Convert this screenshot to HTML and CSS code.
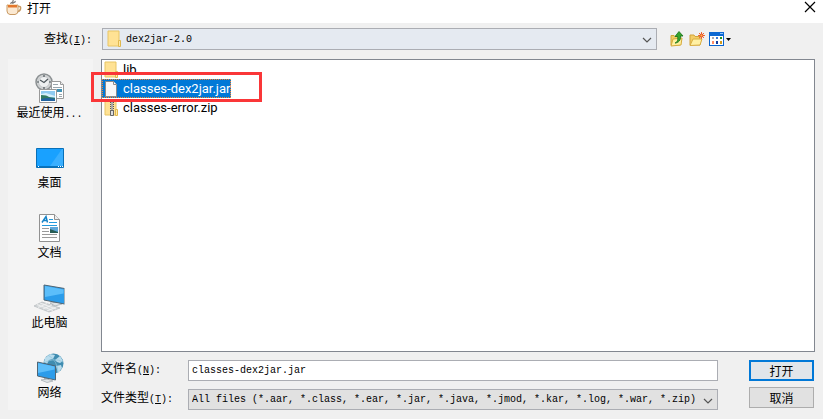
FILE: index.html
```
<!DOCTYPE html>
<html lang="zh-CN">
<head>
  <meta charset="UTF-8">
  <meta name="viewport" content="width=device-width, initial-scale=1.0">
  <title>打开</title>
  <link rel="stylesheet" href="styles.css">
</head>
<body>
  <div class="dialog">
    <header class="titlebar">
      <svg class="cup" width="16" height="16" viewBox="0 0 16 16">
        <path d="M5 4C4 2 8 3 7 0M7 4C6 2 10 3 9 1" fill="none" stroke="#777" stroke-width="1.2"/>
        <path d="M11.5 6.500h2q1.500 0 1 2.500t-3.500 2.500" fill="none" stroke="#c79a62" stroke-width="1.500"/>
        <path d="M1 5h11v6q0 3-3 3.500H4Q1 14 1 11z" fill="#fbe9d2" stroke="#c99a63"/>
        <path d="M2 5h9v2.500H2z" fill="#e3772c"/>
        <path d="M2 4.500h9" stroke="#f5dfc0"/>
      </svg>
      <span class="title">打开</span>
      <button type="button" class="close" aria-label="关闭">
        <svg width="12" height="12" viewBox="0 0 12 12"><path d="M1 1l10 10M11 1L1 11" stroke="#000" stroke-width="1.200"/></svg>
      </button>
    </header>

    <div class="lookin">
      <label class="label" for="lookin">查找<span class="mono">(<u>I</u>):</span></label>
      <div class="combo combo-folder">
        <select id="lookin" class="field"><option>dex2jar-2.0</option></select>
        <svg class="folder" width="16" height="18" viewBox="0 0 16 18">
          <path d="M1 1h11v15H1z" fill="#ffe294" stroke="#e8c564"/>
          <path d="M11.500 10.500h2v6h-2z" fill="#ffe9a8" stroke="#e0b84e"/>
        </svg>
        <svg class="arrow" width="10" height="6" viewBox="0 0 10 6"><path d="M1 1l4 4 4-4" fill="none" stroke="#555" stroke-width="1.200"/></svg>
      </div>
      <div class="tools">
        <button type="button" class="tool" aria-label="向上一级">
          <svg width="16" height="16" viewBox="0 0 16 16">
            <path d="M2 4.500h3l1 1h5V14H2z" fill="#f0cd62" stroke="#cfa53a"/>
            <path d="M2 15l2-7 9-1-1 7z" fill="#fff0a0" stroke="#d5aa3c"/>
            <path d="M6 12c3-1 3-4 2.500-6.500H6L10 .500 14 5h-2.500c.5 4-2 7-5.500 7z" fill="#35a52d" stroke="#187018" stroke-width=".8"/>
          </svg>
        </button>
        <button type="button" class="tool" aria-label="新建文件夹">
          <svg width="16" height="16" viewBox="0 0 16 16">
            <path d="M1 14V4h4l1 1.500h5V14z" fill="#f3cd66" stroke="#d2a33b"/>
            <path d="M1 14.500L4 8h9l-2 6z" fill="#fff0a3" stroke="#d9ae43"/>
            <path d="M12.500 1v7M9 4.500h7M10 2l5 5M15 2l-5 5" stroke="#f06a34"/>
            <circle cx="12.500" cy="4.500" r="1.500" fill="#ffb24c" stroke="#e54824"/>
          </svg>
        </button>
        <button type="button" class="tool tool-view" aria-label="查看菜单">
          <svg width="23" height="16" viewBox="0 0 23 16">
            <rect x=".5" y="1.500" width="14" height="13" fill="#fff" stroke="#0864cf"/>
            <path d="M0 1h15v4H0z" fill="#0b67d2"/>
            <path d="M11 2h3v1h-3z" fill="#8dc2ff"/>
            <path d="M3 6h2v2H3z" fill="#a8a8b0"/><path d="M7 6h2v2H7z" fill="#3a79d5"/><path d="M11 6h2v2h-2z" fill="#20911f"/>
            <path d="M3 10h2v3H3z" fill="#ff8a66"/><path d="M7 10h2v3H7z" fill="#123a9c"/><path d="M11 10h2v3h-2z" fill="#d29b1e"/>
            <path d="M17 7h5l-2.500 3z" fill="#000"/>
          </svg>
        </button>
      </div>
    </div>

    <div class="content">
      <nav class="places">
        <button type="button" class="place">
          <svg width="32" height="32" viewBox="0 0 32 32">
            <circle cx="10" cy="10" r="8" fill="#d3d5d6" stroke="#8b9092" stroke-width="1.500"/>
            <circle cx="10" cy="10" r="5.500" fill="#eef0f1" stroke="#c1c4c6"/>
            <path d="M10 3v2M10 15v2M3 10h2M15 10h2M6 8l4 2.500L14 7" fill="none" stroke="#4d565b" stroke-width="1.200"/>
            <path d="M17.500 9.500h9l3 3v14h-12z" fill="#fff" stroke="#9b9b9b"/>
            <path d="M26.500 9.500v3h3" fill="#eee" stroke="#9b9b9b"/>
            <path d="M19 12.500h5M19 15.500h9M19 18.500h4M25 22.500h3M25 24.500h3" stroke="#9ba6ad"/>
            <path d="M23 17h5v3h-5z" fill="#3f91b5"/>
            <path d="M5.500 17.500h17v13h-17z" fill="#fff" stroke="#999"/>
            <path d="M7 19h14v10H7z" fill="#8fcbf2"/>
            <path d="M7 22l5-1 9 3v1H7z" fill="#d5effa"/>
            <path d="M7 23q6 0 8 2l6 1v2H7z" fill="#327b62"/>
            <path d="M7 27q7-2 14 0v2H7z" fill="#2364a0"/>
          </svg>
          <span class="place-name">最近使用<span class="mono">...</span></span>
        </button>
        <button type="button" class="place">
          <svg width="32" height="32" viewBox="0 0 32 32">
            <path d="M2.500 6.500h27v19h-27z" fill="#19a1ff" stroke="#0870b8"/>
            <path d="M16 24L28 7h1v17z" fill="#3aafff"/>
            <path d="M3 24h26v1H3z" fill="#0873bd"/>
            <path d="M4 24.500h1M24 24.500h1M26 24.500h1M28 24.500h1" stroke="#fff"/>
          </svg>
          <span class="place-name">桌面</span>
        </button>
        <button type="button" class="place">
          <svg width="32" height="32" viewBox="0 0 32 32">
            <path d="M5.500 2.500h15l5 5v22h-20z" fill="#fff" stroke="#919191"/>
            <path d="M20.500 2.500v5h5" fill="#eee" stroke="#919191"/>
            <path d="M8 10.500l4-6 1.500 6M10 8.500h3" fill="none" stroke="#1683c7" stroke-width="1.500"/>
            <path d="M15 7.500h4M15 10.500h8M8 13.500h15" stroke="#249bdd"/>
            <path d="M8 16.500h7M8 19.500h7M8 22.500h15M8 25.500h15" stroke="#9a9a9a"/>
            <path d="M16 15h8v6h-8z" fill="#5da6d8"/>
            <path d="M16 17l8 3v1h-8z" fill="#285d55"/>
          </svg>
          <span class="place-name">文档</span>
        </button>
        <button type="button" class="place">
          <svg width="32" height="32" viewBox="0 0 32 32">
            <path d="M0 24l8-4 18 6-11 4z" fill="#d4d8da" stroke="#b4b9bc" stroke-width=".7"/>
            <path d="M3 22.500l16 6M6 21l16 6M4 25.500l9-4M9 27l9-4M13 29l9-4" stroke="#f5f5f5" stroke-width=".8"/>
            <path d="M19 19l5 2v2h-5z" fill="#a6afb4"/>
            <path d="M16 21l8-1 4 2-7 2z" fill="#e0e4e6" stroke="#a6afb4" stroke-width=".8"/>
            <path d="M10 3l20.500 3.500V22L10 18z" fill="#2b9cea" stroke="#4f6574"/>
            <path d="M11 4l18.500 3.500v4L11 15z" fill="#5cbefa"/>
            <path d="M30.500 6v16" stroke="#a7b4bb"/>
          </svg>
          <span class="place-name">此电脑</span>
        </button>
        <button type="button" class="place">
          <svg width="32" height="32" viewBox="0 0 32 32">
            <circle cx="19.500" cy="11.500" r="10" fill="#3f8cb0"/>
            <path d="M11 6l5-4 5 1-2 4-4 1-2 4-3-2zM21 8l5-4 3 5-3 2-3-1zM22 14l5-1 1 3-4 5z" fill="#b8dced"/>
            <path d="M14 3q10 6 10 18M10 11q10-6 19-1" fill="none" stroke="#8dc1d8" stroke-width=".7"/>
            <path d="M10 25l5 1v3h-5z" fill="#a6afb4"/>
            <path d="M7 28l6-1 6 2-6 1.500z" fill="#e0e4e6" stroke="#a6afb4" stroke-width=".8"/>
            <path d="M3.500 10l18 4v14l-18-4z" fill="#2b9cea" stroke="#4f6574"/>
            <path d="M4 11l16.500 3.500v3L4 21z" fill="#5cbefa"/>
          </svg>
          <span class="place-name">网络</span>
        </button>
      </nav>

      <main class="main">
        <div class="files">
          <ul class="list">
            <li><button type="button" class="file">
              <svg width="16" height="18" viewBox="0 0 16 18">
                <path d="M1 1h11v15H1z" fill="#ffe294" stroke="#e8c564"/>
                <path d="M11.500 10.500h2v6h-2z" fill="#ffe9a8" stroke="#e0b84e"/>
              </svg>lib</button></li>
            <li><button type="button" class="file active">
              <svg width="16" height="18" viewBox="0 0 16 18">
                <path d="M1.500 1.500h8l3 3v12h-11z" fill="#f8f8f8" stroke="#8b8b8b"/>
                <path d="M9.500 1.500v3h3" fill="#fff" stroke="#8b8b8b"/>
              </svg>classes-dex2jar.jar</button></li>
            <li><button type="button" class="file">
              <svg width="16" height="18" viewBox="0 0 16 18">
                <path d="M1 1h11v15H1z" fill="#ffe294" stroke="#e8c564"/>
                <path d="M11.500 10.500h2v6h-2z" fill="#ffe9a8" stroke="#e0b84e"/>
                <path d="M8 1v12" stroke="#555" stroke-width="4" stroke-dasharray="1 1"/>
                <path d="M7 1h2v12H7z" fill="#aaa"/>
                <path d="M6.500 11.500h3v5h-3z" fill="#ddd" stroke="#666"/>
              </svg>classes-error.zip</button></li>
          </ul>
          <div class="mark"></div>
        </div>

        <form class="form">
          <div class="rows">
            <label class="label" for="filename">文件名<span class="mono">(<u>N</u>):</span></label>
            <input type="text" class="field" id="filename" value="classes-dex2jar.jar">
            <label class="label" for="filetype">文件类型<span class="mono">(<u>T</u>):</span></label>
            <div class="combo">
              <select id="filetype" class="field"><option>All files (*.aar, *.class, *.ear, *.jar, *.java, *.jmod, *.kar, *.log, *.war, *.zip)</option></select>
              <svg class="arrow" width="10" height="6" viewBox="0 0 10 6"><path d="M1 1l4 4 4-4" fill="none" stroke="#555" stroke-width="1.200"/></svg>
            </div>
          </div>
          <div class="actions">
            <button type="button" class="btn primary">打开</button>
            <button type="button" class="btn">取消</button>
          </div>
        </form>
      </main>
    </div>
  </div>
</body>
</html>
```
FILE: styles.css
```
* {
  box-sizing: border-box;
}
body {
  margin: 0;
  background: #f0f0f0;
  color: #000;
  font: 12px/16px "Noto Sans CJK SC", sans-serif;
}
button {
  font: inherit;
  color: inherit;
  padding: 0;
  border: none;
  background: none;
}
svg {
  display: block;
  flex: none;
}
.mono {
  font-family: "Liberation Mono", monospace;
  font-size: 10px;
}
.dialog {
  min-height: 100vh;
  display: flex;
  flex-direction: column;
}
.titlebar {
  display: flex;
  align-items: flex-start;
  height: 23px;
  padding: 0 7px 0 6px;
  background: #fff;
}
.title {
  flex: 1;
  margin-left: 5px;
}
.close {
  padding-top: 1px;
}
.lookin {
  display: flex;
  align-items: center;
  padding: 5px 90px 9px 8px;
}
.lookin .label {
  width: 94px;
  padding-right: 10px;
  text-align: right;
}
.combo {
  position: relative;
  flex: 1;
  min-width: 0;
}
.field {
  display: block;
  width: 100%;
  height: 22px;
  padding: 0 3px;
  border: 1px solid #abadb3;
  border-radius: 0;
  outline: none;
  background: #fff;
  color: #000;
  font: 10px "Liberation Mono", monospace;
}
select.field {
  appearance: none;
  padding-right: 20px;
  background: #e1e1e1;
}
.combo-folder .field {
  padding-left: 23px;
  background: #e5eaf1;
}
.folder {
  position: absolute;
  left: 5px;
  top: 2px;
  pointer-events: none;
}
.arrow {
  position: absolute;
  right: 5px;
  top: 9px;
  pointer-events: none;
}
.tools {
  display: flex;
  gap: 4px;
  width: 76px;
  padding-left: 12px;
}
.content {
  flex: 1;
  display: flex;
  gap: 8px;
  padding: 0 8px 9px;
}
.places {
  width: 85px;
  background: #f4f4f4;
}
.place {
  display: flex;
  flex-direction: column;
  align-items: center;
  width: 100%;
  height: 70px;
  padding: 13px 2px 0 0;
}
.main {
  flex: 1;
  min-width: 0;
  display: flex;
  flex-direction: column;
}
.files {
  position: relative;
  flex: 1;
  border: 1px solid #828790;
  background: #fff;
}
.list {
  margin: 0;
  padding: 0;
  list-style: none;
}
.file {
  display: flex;
  align-items: center;
  gap: 3px;
  height: 19px;
  padding: 0 1px 0 2px;
  font: 13px/16px Roboto, sans-serif;
}
.file.active {
  outline: 1px dotted #ff8728;
  outline-offset: -1px;
  background: #0078d7;
  color: #fff;
}
.mark {
  position: absolute;
  left: -11px;
  top: 12px;
  width: 171px;
  height: 30px;
  border: 3px solid #fa3638;
  pointer-events: none;
}
.form {
  display: flex;
  gap: 31px;
  padding: 8px 1px 0 0;
}
.rows {
  flex: 1;
  display: grid;
  grid-template-columns: 87px 1fr;
  gap: 8px 0;
}
.form .field {
  height: 21px;
}
.actions {
  display: flex;
  flex-direction: column;
  gap: 6px;
  width: 65px;
}
.btn {
  height: 21px;
  border: 1px solid #adadad;
  background: #e1e1e1;
}
.btn.primary {
  border: 2px solid #0078d7;
  background: #e0e5ea;
}
```
